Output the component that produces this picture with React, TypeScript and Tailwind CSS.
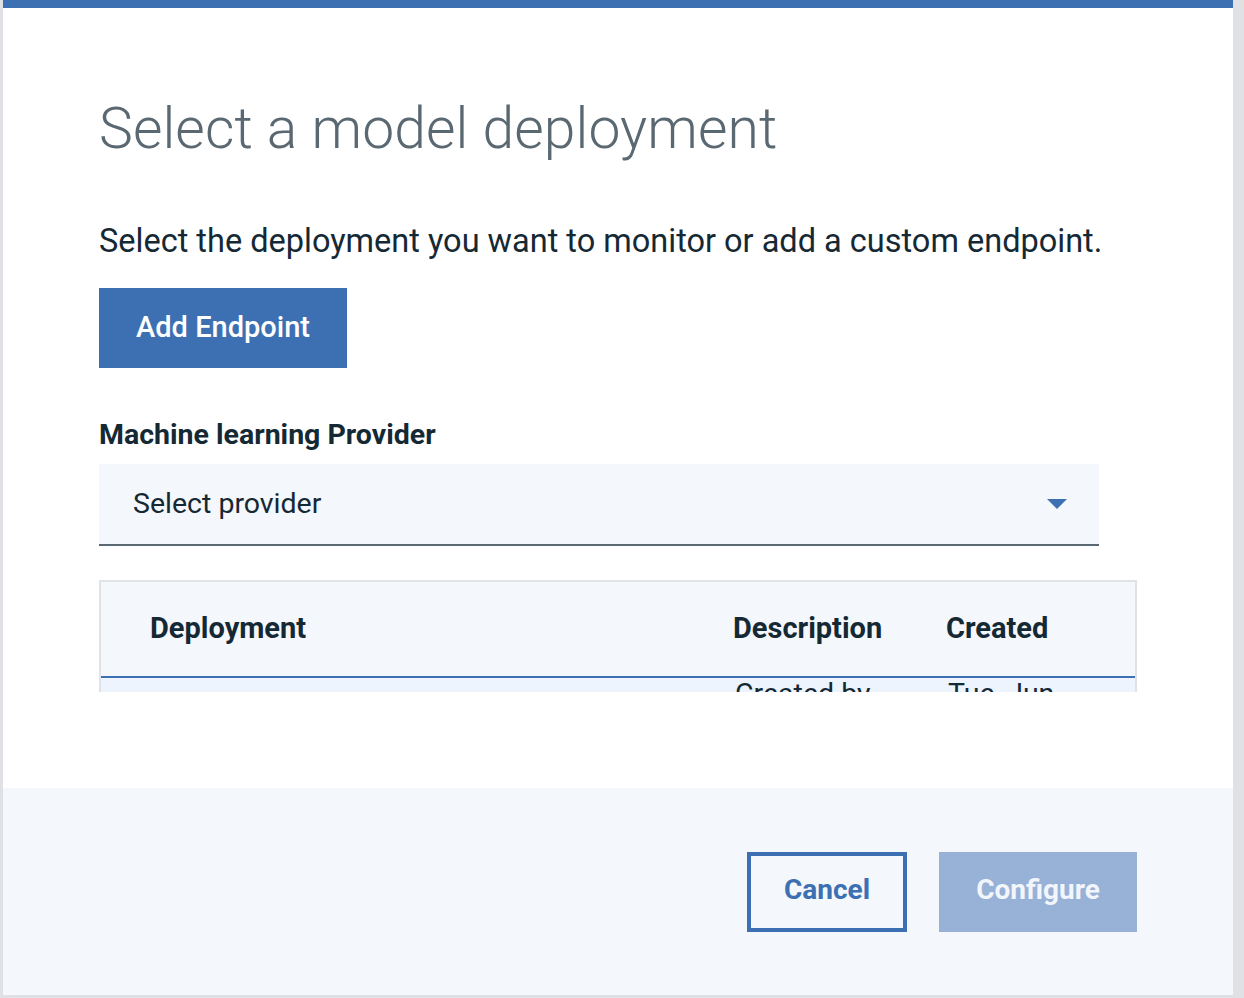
import React from "react";

const font = { fontFamily: "Roboto, 'Open Sans', sans-serif" };

function Caret() {
    return (
        <svg width="20" height="10" viewBox="0 0 20 10" className="shrink-0">
            <polygon points="0,0 20,0 10,10" fill="#3d70b2" />
        </svg>
    );
}

export default function App() {
    return (
        <div className="flex h-[998px] w-[1244px] bg-[#e0e1e4] pl-[3px] pr-[11px] pb-[3px]" style={font}>
            <div className="flex w-[1230px] flex-col bg-white">
                <div className="h-[8px] bg-[#3d70b2]" />
                <div className="flex h-[780px] flex-col pl-[96px] pr-[96px]">
                    <h1 className="mt-[92px] text-[57px] font-light leading-none tracking-[0.1px] text-[#5a6872]">
                        Select a model deployment
                    </h1>
                    <p className="mt-[68px] text-[32.5px] leading-none text-[#152935]">
                        Select the deployment you want to monitor or add a custom endpoint.
                    </p>
                    <button className="mt-[30px] flex h-[80px] w-[248px] items-center justify-center bg-[#3d70b2] text-[29px] font-medium text-white">
                        Add Endpoint
                    </button>
                    <label className="mt-[53px] text-[28.5px] font-bold leading-none text-[#152935]">
                        Machine learning Provider
                    </label>
                    <div className="mt-[15px] flex h-[82px] w-[1000px] items-center justify-between border-b-2 border-[#5a6872] bg-[#f4f7fb] pl-[34px] pr-[32px]">
                        <span className="text-[28.5px] text-[#152935]">Select provider</span>
                        <Caret />
                    </div>
                    <div className="mt-[34px] h-[112px] w-[1038px] overflow-hidden border-x-2 border-t-2 border-[#dfe3e6] bg-[#f4f7fb]">
                        <div className="grid h-[94px] grid-cols-[583px_213px_1fr] items-center pl-[49px] text-[29px] font-bold text-[#152935]">
                            <span>Deployment</span>
                            <span>Description</span>
                            <span>Created</span>
                        </div>
                        <div className="-mx-[2px] grid h-[60px] grid-cols-[583px_213px_1fr] border-2 border-[#3d70b2] bg-[#edf4fd] pl-[51px] text-[28.5px] leading-[32px] text-[#152935]">
                            <span></span>
                            <span>Created by</span>
                            <span>Tue, Jun</span>
                        </div>
                    </div>
                </div>
                <div className="flex flex-1 items-center justify-end gap-[32px] bg-[#f4f7fb] pr-[96px]">
                    <button className="flex h-[80px] w-[160px] items-center justify-center border-4 border-[#3d70b2] pb-[3px] text-[28px] font-bold text-[#3d70b2]">
                        Cancel
                    </button>
                    <button className="flex h-[80px] w-[198px] items-center justify-center bg-[#98b1d7] pb-[3px] text-[28px] font-bold text-[#f2f6fb]">
                        Configure
                    </button>
                </div>
            </div>
        </div>
    );
}
